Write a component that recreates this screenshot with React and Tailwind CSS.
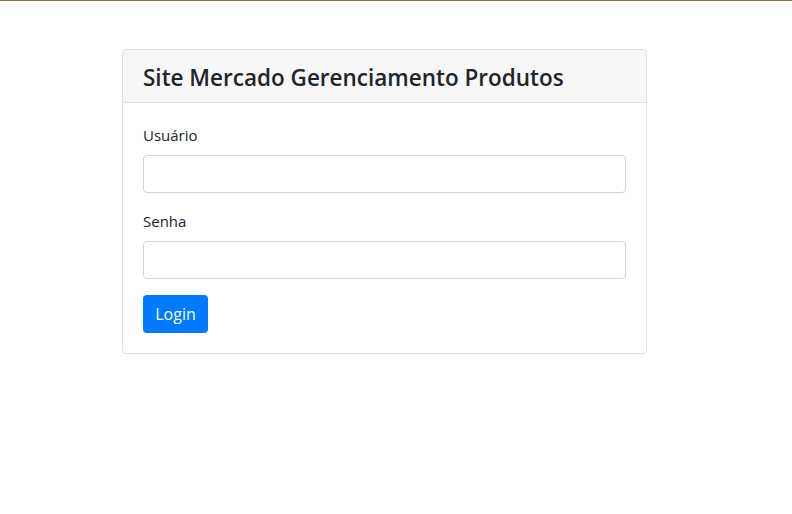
import React from 'react';

const App = () => {
  return (
    <div className="min-h-[514px] bg-white border-t border-[#a06b3c]" style={{ fontFamily: '"Open Sans", sans-serif' }}>
      <div className="ml-[122px] mt-[48px] w-[525px] border border-[#dfdfdf] rounded">
        <div className="bg-[#f7f7f7] border-b border-[#dfdfdf] px-5 pt-[4px] h-[53px] flex items-center rounded-t">
          <h4 className="text-[22.5px] font-semibold text-[#212529]">Site Mercado Gerenciamento Produtos</h4>
        </div>
        <div className="p-5">
          <div className="mb-4">
            <label className="block text-[15px] text-[#212529] mb-2 leading-6">Usuário</label>
            <input type="text" className="w-full h-[38px] border border-[#ced4da] rounded px-3 outline-none" />
          </div>
          <div className="mb-4">
            <label className="block text-[15px] text-[#212529] mb-2 leading-6">Senha</label>
            <input type="password" className="w-full h-[38px] border border-[#ced4da] rounded px-3 outline-none" />
          </div>
          <button className="bg-[#007bff] text-white text-[16px] h-[38px] w-[65px] rounded">Login</button>
        </div>
      </div>
    </div>
  );
};

export default App;
